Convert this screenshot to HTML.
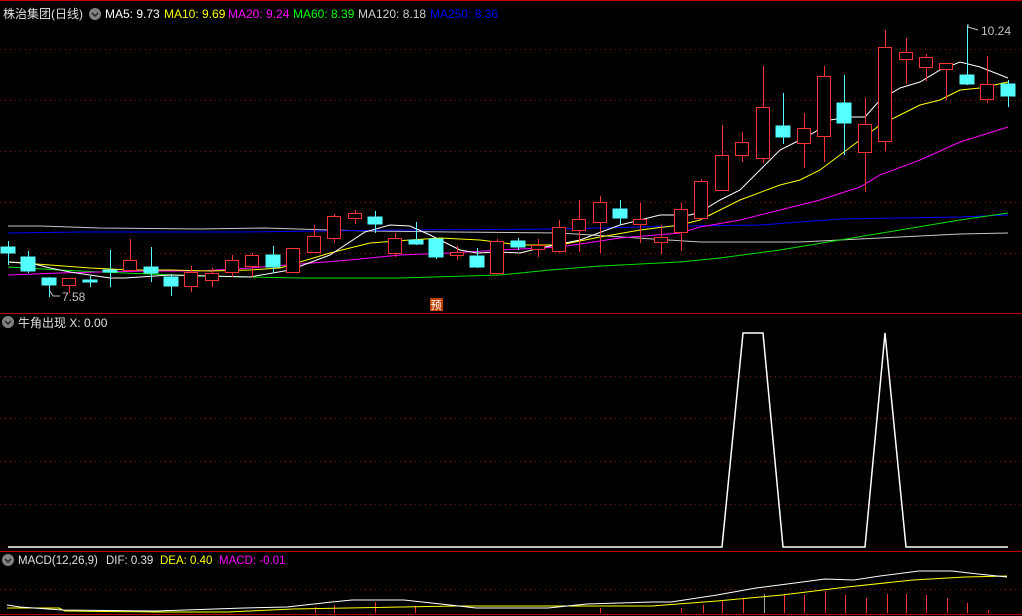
<!DOCTYPE html>
<html><head><meta charset="utf-8"><style>
body{margin:0;background:#000;width:1022px;height:616px;overflow:hidden}
svg{display:block}
text{font-family:"Liberation Sans","Noto Sans CJK SC",sans-serif;font-size:12px}
</style></head><body>
<svg width="1022" height="616" viewBox="0 0 1022 616" xmlns="http://www.w3.org/2000/svg">
<rect width="1022" height="616" fill="#000"/>
<line x1="0" y1="0.5" x2="1022" y2="0.5" stroke="#c00000"/>
<g stroke="#8a1010" stroke-dasharray="1,4">
<line x1="0" y1="49.5" x2="1022" y2="49.5"/><line x1="0" y1="100.5" x2="1022" y2="100.5"/>
<line x1="0" y1="151.5" x2="1022" y2="151.5"/><line x1="0" y1="202.5" x2="1022" y2="202.5"/>
<line x1="0" y1="253.5" x2="1022" y2="253.5"/>
<line x1="0" y1="376.5" x2="1022" y2="376.5"/><line x1="0" y1="418.5" x2="1022" y2="418.5"/>
<line x1="0" y1="461.5" x2="1022" y2="461.5"/><line x1="0" y1="504.5" x2="1022" y2="504.5"/>
<line x1="0" y1="589.5" x2="1022" y2="589.5"/>
</g>
<line x1="0" y1="313.5" x2="1022" y2="313.5" stroke="#c00000"/>
<line x1="0" y1="551.5" x2="1022" y2="551.5" stroke="#c00000"/>
<line x1="0" y1="614.5" x2="1022" y2="614.5" stroke="#c00000"/>

<g fill="none" stroke-width="1">
<polyline stroke="#c8c8c8" points="8,226 40,226 100,228 200,229 265,228 330,230 370,231 450,232 560,233 700,242 760,242 800,242 840,240 900,237 960,234 1008,233"/>
<polyline stroke="#0000ff" points="8,233 80,232 240,232 400,230 560,229 680,226 760,225 840,219 900,218 960,217 1008,215"/>
<polyline stroke="#00e000" points="8,267 60,270 100,272 150,274 200,276 300,278 400,278 500,275 550,270 600,266 680,262 720,258 780,250 840,240 900,230 960,220 1008,213"/>
<polyline stroke="#ff00ff" points="8,275 60,273 100,272 150,271 200,271 250,268 300,264 350,260 400,255 450,253 500,250 560,247 620,238 680,233 700,227 740,220 780,210 820,200 860,187 880,175 920,160 960,142 1008,127"/>
<polyline stroke="#ffff00" points="8,262 50,265 90,268 130,270 170,270 210,271 250,270 280,268 330,253 370,243 410,240 440,238 480,240 520,245 560,245 600,237 640,230 680,225 700,220 740,200 780,185 800,180 820,170 840,155 860,140 880,125 900,115 920,105 940,100 960,90 980,88 1008,82"/>
<polyline stroke="#ffffff" points="8,262 30,263 50,268 70,272 90,275 110,278 125,278 170,275 250,277 290,270 330,255 365,232 390,225 410,226 430,235 460,250 477,253 500,252 520,253 540,248 580,240 620,225 660,215 690,215 700,212 720,200 740,190 760,170 780,150 800,140 815,132 830,120 850,117 865,117 880,100 900,88 920,82 940,70 960,62 980,67 1008,78"/>
</g>

<g stroke-width="1">
<g stroke="#54ffff" fill="#54ffff">
<line x1="8.5" y1="241" x2="8.5" y2="265"/><rect x="1" y="247" width="14" height="6"/>
<line x1="28.5" y1="251" x2="28.5" y2="273"/><rect x="21" y="257" width="14" height="14"/>
<line x1="49.5" y1="277" x2="49.5" y2="297"/><rect x="42" y="278" width="14" height="7"/>
<line x1="90.5" y1="276" x2="90.5" y2="287"/><rect x="83" y="280" width="14" height="2"/>
<line x1="110.5" y1="250" x2="110.5" y2="287"/><rect x="103" y="270" width="14" height="2"/>
<line x1="151.5" y1="247" x2="151.5" y2="282"/><rect x="144" y="267" width="14" height="6"/>
<line x1="171.5" y1="274" x2="171.5" y2="296"/><rect x="164" y="277" width="14" height="9"/>
<line x1="273.5" y1="246" x2="273.5" y2="273"/><rect x="266" y="255" width="14" height="12"/>
<line x1="375.5" y1="211" x2="375.5" y2="233"/><rect x="368" y="217" width="14" height="7"/>
<line x1="416.5" y1="222" x2="416.5" y2="245"/><rect x="409" y="240" width="14" height="4"/>
<line x1="436.5" y1="238" x2="436.5" y2="259"/><rect x="429" y="239" width="14" height="18"/>
<line x1="477.5" y1="248" x2="477.5" y2="268"/><rect x="470" y="256" width="14" height="11"/>
<line x1="518.5" y1="238" x2="518.5" y2="250"/><rect x="511" y="241" width="14" height="6"/>
<line x1="620.5" y1="200" x2="620.5" y2="225"/><rect x="613" y="209" width="14" height="9"/>
<line x1="783.5" y1="93" x2="783.5" y2="144"/><rect x="776" y="126" width="14" height="11"/>
<line x1="844.5" y1="75" x2="844.5" y2="155"/><rect x="837" y="103" width="14" height="20"/>
<line x1="967.5" y1="25" x2="967.5" y2="85"/><rect x="960" y="75" width="14" height="9"/>
<line x1="1008.5" y1="80" x2="1008.5" y2="107"/><rect x="1001" y="84" width="14" height="12"/>
</g>
<g stroke="#ff3232" fill="#000">
<line x1="69.5" y1="278" x2="69.5" y2="293"/><rect x="62.5" y="278.5" width="13" height="7"/>
<line x1="130.5" y1="239" x2="130.5" y2="271"/><rect x="123.5" y="260.5" width="13" height="10"/>
<line x1="191.5" y1="266" x2="191.5" y2="292"/><rect x="184.5" y="272.5" width="13" height="14"/>
<line x1="212.5" y1="268" x2="212.5" y2="287"/><rect x="205.5" y="273.5" width="13" height="7"/>
<line x1="232.5" y1="255" x2="232.5" y2="277"/><rect x="225.5" y="260.5" width="13" height="12"/>
<line x1="252.5" y1="253" x2="252.5" y2="277"/><rect x="245.5" y="255.5" width="13" height="11"/>
<line x1="293.5" y1="248" x2="293.5" y2="273"/><rect x="286.5" y="248.5" width="13" height="24"/>
<line x1="314.5" y1="225" x2="314.5" y2="253"/><rect x="307.5" y="236.5" width="13" height="16"/>
<line x1="334.5" y1="214" x2="334.5" y2="243"/><rect x="327.5" y="216.5" width="13" height="22"/>
<line x1="355.5" y1="210" x2="355.5" y2="224"/><rect x="348.5" y="213.5" width="13" height="5"/>
<line x1="395.5" y1="233" x2="395.5" y2="257"/><rect x="388.5" y="238.5" width="13" height="15"/>
<line x1="457.5" y1="246" x2="457.5" y2="260"/><rect x="450.5" y="252.5" width="13" height="3"/>
<line x1="497.5" y1="239" x2="497.5" y2="274"/><rect x="490.5" y="241.5" width="13" height="32"/>
<line x1="538.5" y1="239" x2="538.5" y2="257"/><rect x="531.5" y="245.5" width="13" height="4"/>
<line x1="559.5" y1="220" x2="559.5" y2="253"/><rect x="552.5" y="227.5" width="13" height="24"/>
<line x1="579.5" y1="200" x2="579.5" y2="252"/><rect x="572.5" y="219.5" width="13" height="11"/>
<line x1="600.5" y1="196" x2="600.5" y2="253"/><rect x="593.5" y="202.5" width="13" height="20"/>
<line x1="640.5" y1="203" x2="640.5" y2="243"/><rect x="633.5" y="219.5" width="13" height="5"/>
<line x1="661.5" y1="225" x2="661.5" y2="254"/><rect x="654.5" y="237.5" width="13" height="5"/>
<line x1="681.5" y1="203" x2="681.5" y2="251"/><rect x="674.5" y="209.5" width="13" height="23"/>
<line x1="701.5" y1="179" x2="701.5" y2="220"/><rect x="694.5" y="181.5" width="13" height="37"/>
<line x1="722.5" y1="125" x2="722.5" y2="191"/><rect x="715.5" y="155.5" width="13" height="35"/>
<line x1="742.5" y1="132" x2="742.5" y2="162"/><rect x="735.5" y="142.5" width="13" height="13"/>
<line x1="763.5" y1="66" x2="763.5" y2="163"/><rect x="756.5" y="107.5" width="13" height="51"/>
<line x1="804.5" y1="113" x2="804.5" y2="168"/><rect x="797.5" y="128.5" width="13" height="15"/>
<line x1="824.5" y1="66" x2="824.5" y2="162"/><rect x="817.5" y="76.5" width="13" height="60"/>
<line x1="865.5" y1="98" x2="865.5" y2="192"/><rect x="858.5" y="124.5" width="13" height="28"/>
<line x1="885.5" y1="30" x2="885.5" y2="151"/><rect x="878.5" y="47.5" width="13" height="94"/>
<line x1="906.5" y1="38" x2="906.5" y2="84"/><rect x="899.5" y="52.5" width="13" height="7"/>
<line x1="926.5" y1="54" x2="926.5" y2="81"/><rect x="919.5" y="57.5" width="13" height="10"/>
<line x1="946.5" y1="63" x2="946.5" y2="100"/><rect x="939.5" y="63.5" width="13" height="6"/>
<line x1="987.5" y1="56" x2="987.5" y2="103"/><rect x="980.5" y="84.5" width="13" height="15"/>
</g>
</g>

<text x="3" y="18" fill="#e0e0e0">株治集团(日线)</text>
<circle cx="95" cy="14" r="6" fill="#808080"/>
<polyline points="92,13 95,16 98,13" fill="none" stroke="#222" stroke-width="1.5"/>
<text x="105" y="18" fill="#ffffff">MA5: 9.73</text>
<text x="164" y="18" fill="#ffff00">MA10: 9.69</text>
<text x="228" y="18" fill="#ff00ff">MA20: 9.24</text>
<text x="293" y="18" fill="#00ff00">MA60: 8.39</text>
<text x="358" y="18" fill="#d0d0d0">MA120: 8.18</text>
<text x="430" y="18" fill="#0000ff">MA250: 8.36</text>
<polyline points="968,24 968,27 978,30" fill="none" stroke="#c0c0c0"/>
<text x="981" y="35" fill="#c0c0c0">10.24</text>
<polyline points="50,291 53,296 60,296" fill="none" stroke="#c0c0c0"/>
<text x="62" y="301" fill="#c0c0c0">7.58</text>
<rect x="430" y="298" width="13" height="13" fill="#c04000"/>
<text x="430.5" y="309" fill="#fff" style="font-size:11px">预</text>

<circle cx="8" cy="322" r="6" fill="#808080"/>
<polyline points="5,321 8,324 11,321" fill="none" stroke="#222" stroke-width="1.5"/>
<text x="18" y="327" fill="#e0e0e0">牛角出现  X: 0.00</text>
<polyline fill="none" stroke="#fff" stroke-width="1.5" points="8,547 722,547 743,333 763,333 783,547 865,547 885,333 906,547 1008,547"/>

<circle cx="8" cy="560" r="6" fill="#808080"/>
<polyline points="5,559 8,562 11,559" fill="none" stroke="#222" stroke-width="1.5"/>
<text x="18" y="564" fill="#e0e0e0" style="font-size:11.5px">MACD(12,26,9)</text>
<text x="106" y="564" fill="#e0e0e0" style="font-size:11.5px">DIF: 0.39</text>
<text x="160" y="564" fill="#ffff00" style="font-size:11.5px">DEA: 0.40</text>
<text x="219" y="564" fill="#ff00ff" style="font-size:11.5px">MACD: -0.01</text>
<g stroke="#ff3232" stroke-width="1">
<line x1="703.5" y1="605" x2="703.5" y2="613"/><line x1="722.5" y1="601" x2="722.5" y2="613"/>
<line x1="743.5" y1="598" x2="743.5" y2="613"/><line x1="784.5" y1="594" x2="784.5" y2="613"/>
<line x1="804.5" y1="595" x2="804.5" y2="613"/><line x1="825.5" y1="591" x2="825.5" y2="613"/>
<line x1="845.5" y1="595" x2="845.5" y2="613"/><line x1="866.5" y1="598" x2="866.5" y2="613"/>
<line x1="887.5" y1="594" x2="887.5" y2="613"/><line x1="906.5" y1="594" x2="906.5" y2="613"/>
<line x1="926.5" y1="595" x2="926.5" y2="613"/><line x1="947.5" y1="598" x2="947.5" y2="613"/>
<line x1="967.5" y1="603" x2="967.5" y2="613"/><line x1="988.5" y1="610" x2="988.5" y2="613"/>
<line x1="375.5" y1="602" x2="375.5" y2="613"/><line x1="334.5" y1="605" x2="334.5" y2="613"/>
<line x1="315.5" y1="607" x2="315.5" y2="613"/><line x1="415.5" y1="606" x2="415.5" y2="613"/>
<line x1="600.5" y1="608" x2="600.5" y2="613"/><line x1="681.5" y1="608" x2="681.5" y2="613"/>
</g>
<line x1="764.5" y1="594" x2="764.5" y2="613" stroke="#a0a0a0"/>
<g fill="none" stroke-width="1">
<polyline stroke="#ffff00" points="7,608 59,608 65,611 156,612 228,612 293,609 456,606 652,606 717,601 782,595 847,587 913,580 965,577 1007,576"/>
<polyline stroke="#ffffff" points="7,605 20,607 62,610 156,611 244,608 287,607 332,602 352,600 404,600 450,605 476,608 548,608 587,604 652,602 671,602 717,595 756,588 795,583 825,579 854,580 880,576 919,571 952,571 978,574 1007,577"/>
</g>
</svg>
</body></html>
